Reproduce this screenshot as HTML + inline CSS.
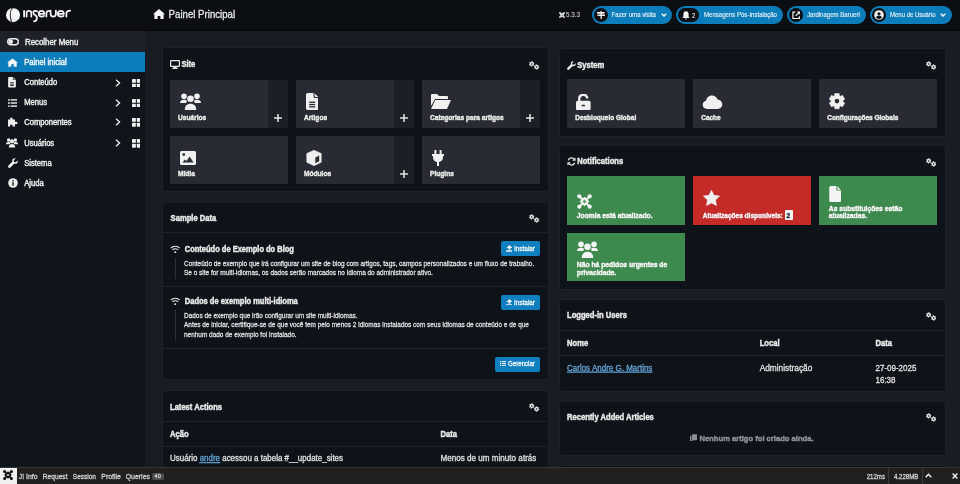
<!DOCTYPE html>
<html><head><meta charset="utf-8">
<style>
*{box-sizing:border-box;margin:0;padding:0}
html,body{width:960px;height:484px;overflow:hidden;background:#181c23;font-family:"Liberation Sans",sans-serif;color:#e6e6e6}
.abs{position:absolute}
svg{display:block}
.card{position:absolute;background:#0e1219;border:1px solid #1d2128;border-radius:2px}
.txt{position:absolute;white-space:nowrap;-webkit-text-stroke:0.2px currentColor}
</style></head><body>
<div class="abs" style="left:0px;top:0px;width:960px;height:31px;background:#0b0e13;"></div>
<div class="abs" style="left:0px;top:29px;width:960px;height:2px;background:#090b0f;"></div>
<svg class="abs" style="left:0;top:0" width="80" height="31" viewBox="0 0 80 31">
  <ellipse cx="13.05" cy="15.05" rx="7.05" ry="7.15" fill="#f6f6f6"/>
  <path d="M12.3 8.2 C9.6 10.8 9.8 17.5 11.8 22.4" stroke="#3a3c40" stroke-width="1.1" fill="none"/>
  <path d="M12.6 8.6 C13.4 7.7 14.8 7.4 16.2 7.9" stroke="#0e1015" stroke-width="0.9" fill="none"/>
  <g stroke="#f2f2f2" stroke-width="1.8" fill="none" stroke-linecap="round" stroke-linejoin="round">
   <path d="M24.1 10.8 V16.6"/>
   <path d="M26.6 16.6 V12.6 Q26.6 10.9 28.9 10.9 Q31.3 10.9 31.3 12.8 V16.6"/>
   <path d="M37.2 11.4 Q36.2 10.7 35 10.8 Q33.2 11 33.4 12.8 Q33.6 14.2 35.4 15.2 Q37.4 16.6 36.8 19 Q36.2 21.2 34 21.3"/>
   <path d="M39.3 13.9 H44.2 Q44.2 10.8 41.6 10.8 Q38.7 10.8 38.7 13.8 Q38.7 16.6 41.7 16.6 Q43.2 16.6 44 15.9"/>
   <path d="M46.4 16.6 V13.2 Q46.4 10.9 49.6 10.9"/>
   <path d="M50.6 10.6 V13.8 Q50.6 16.6 53.2 16.6 Q55.9 16.6 55.9 13.8 V10.6"/>
   <path d="M58.3 13.9 H63.8 Q63.8 10.8 61 10.8 Q57.8 10.8 57.8 13.8 Q57.8 16.6 61.1 16.6 Q62.7 16.6 63.5 15.9"/>
   <path d="M66.4 16.6 V13.2 Q66.4 10.9 70.2 10.6"/>
  </g>
 </svg>
<div class="abs" style="left:153px;top:9px"><svg width="12" height="10" viewBox="0 0 12 10"><path d="M6 0 L12 5.2 L10.6 5.2 L10.6 10 L7.4 10 L7.4 7 L4.6 7 L4.6 10 L1.4 10 L1.4 5.2 L0 5.2 Z" fill="#f5f5f5"/></svg></div>
<div class="abs" style="left:559px;top:11.6px"><svg width="6" height="6" viewBox="0 0 10 10"><g stroke="#ddd" stroke-width="1.8" fill="none" stroke-linecap="round"><path d="M1.6 1.6 L8.4 8.4 M8.4 1.6 L1.6 8.4"/><path d="M5 2.3 L7.7 5 L5 7.7 L2.3 5 Z"/></g><circle cx="1.6" cy="1.6" r="1.5" fill="#ddd"/><circle cx="8.4" cy="1.6" r="1.5" fill="#ddd"/><circle cx="1.6" cy="8.4" r="1.5" fill="#ddd"/><circle cx="8.4" cy="8.4" r="1.5" fill="#ddd"/></svg></div>
<div class="abs" style="left:592px;top:6px;width:80px;height:18px;background:#0b7dbb;border-radius:9px"></div>
<div class="abs" style="left:594px;top:7.8px;width:14px;height:14px;background:#0b0e13;border-radius:7px"></div>
<div class="abs" style="left:597px;top:11px"><svg width="8" height="8" viewBox="0 0 8 8"><rect x="3.5" y="0" width="1.3" height="8" fill="#f2f2f2"/><path d="M0 1 H7 L8 1.85 L7 2.7 H0 Z" fill="#f2f2f2"/><path d="M8 3.5 H1 L0 4.3 L1 5.1 H8 Z" fill="#f2f2f2"/></svg></div>
<div class="abs" style="left:660.7px;top:13px"><svg width="6" height="4" viewBox="0 0 6 4"><path d="M0.7 0.7 L3 3 L5.3 0.7" stroke="#f2f2f2" stroke-width="1.5" fill="none"/></svg></div>
<div class="abs" style="left:676px;top:6px;width:106.5px;height:18px;background:#0b7dbb;border-radius:9px"></div>
<div class="abs" style="left:678.3px;top:8px;width:20.7px;height:13.8px;background:#0b0e13;border-radius:7px"></div>
<div class="abs" style="left:681.5px;top:11px"><svg width="8" height="9" viewBox="0 0 8 9"><path d="M4 0.3 C6 0.3 6.6 2 6.6 3.5 L6.6 5.6 L7.6 7 L0.4 7 L1.4 5.6 L1.4 3.5 C1.4 2 2 0.3 4 0.3 Z" fill="#f2f2f2"/><path d="M3 7.6 H5 A1 1 0 0 1 3 7.6Z" fill="#f2f2f2"/></svg></div>
<div class="abs" style="left:787px;top:6px;width:79px;height:18px;background:#0b7dbb;border-radius:9px"></div>
<div class="abs" style="left:789px;top:7.8px;width:14px;height:14px;background:#0b0e13;border-radius:7px"></div>
<div class="abs" style="left:791.8px;top:10.8px"><svg width="8.5" height="8.5" viewBox="0 0 9 9"><path d="M3.5 1.2 H1 V8 H7.8 V5.5" stroke="#f2f2f2" stroke-width="1.3" fill="none"/><path d="M5 0.5 H8.5 V4 Z" fill="#f2f2f2"/><path d="M8 1 L3.8 5.2" stroke="#f2f2f2" stroke-width="1.3"/></svg></div>
<div class="abs" style="left:870px;top:6px;width:81.5px;height:18px;background:#0b7dbb;border-radius:9px"></div>
<div class="abs" style="left:872px;top:7.8px;width:14px;height:14px;background:#0b0e13;border-radius:7px"></div>
<div class="abs" style="left:874px;top:10px"><svg width="10" height="10" viewBox="0 0 10 10"><circle cx="5" cy="5" r="4.8" fill="#f2f2f2"/><circle cx="5" cy="3.8" r="1.6" fill="#0e1015"/><path d="M2 7.6 C2.6 6 3.6 5.7 5 5.7 C6.4 5.7 7.4 6 8 7.6 C7.2 8.4 6.2 8.9 5 8.9 C3.8 8.9 2.8 8.4 2 7.6Z" fill="#0e1015"/></svg></div>
<div class="abs" style="left:940.3px;top:13px"><svg width="6" height="4" viewBox="0 0 6 4"><path d="M0.7 0.7 L3 3 L5.3 0.7" stroke="#f2f2f2" stroke-width="1.5" fill="none"/></svg></div>
<div class="abs" style="left:0px;top:31px;width:145px;height:436px;background:#10141b;"></div>
<div class="abs" style="left:0px;top:31px;width:145px;height:21px;background:#1e2128;"></div>
<div class="abs" style="left:7px;top:38.3px"><svg width="12" height="7.5" viewBox="0 0 12 7.5"><rect x="0.7" y="0.7" width="10.6" height="6.1" rx="3.05" stroke="#eee" stroke-width="1.4" fill="none"/><circle cx="3.75" cy="3.75" r="2.3" fill="#eee"/></svg></div>
<div class="abs" style="left:0px;top:52px;width:145px;height:20px;background:#0b7dbb;"></div>
<div class="abs" style="left:7.3px;top:57.8px"><svg width="11" height="9" viewBox="0 0 12 9"><path d="M6 0 L12 4.8 L10.6 4.8 L10.6 9 L7.4 9 L7.4 6.4 L4.6 6.4 L4.6 9 L1.4 9 L1.4 4.8 L0 4.8 Z" fill="#f5f5f5"/></svg></div>
<div class="abs" style="left:8.4px;top:77px"><svg width="8" height="10.5" viewBox="0 0 12.5 17"><path d="M0 1.6 Q0 0 1.6 0 H7.6 V3.6 Q7.6 4.9 8.9 4.9 H12.5 V15.4 Q12.5 17 10.9 17 H1.6 Q0 17 0 15.4 Z" fill="#efefef"/><path d="M8.6 0.3 L12.2 3.9 H9.4 Q8.6 3.9 8.6 3.1 Z" fill="#efefef"/><rect x="3.2" y="8.6" width="6" height="1.3" fill="#10141b"/><rect x="3.2" y="10.9" width="6" height="1.3" fill="#10141b"/><rect x="3.2" y="13.2" width="6" height="1.3" fill="#10141b"/></svg></div>
<div class="abs" style="left:7.9px;top:98.5px"><svg width="9.5" height="8" viewBox="0 0 9.5 8"><circle cx="0.9" cy="0.9" r="0.9" fill="#eee"/><circle cx="0.9" cy="4" r="0.9" fill="#eee"/><circle cx="0.9" cy="7.1" r="0.9" fill="#eee"/><rect x="2.6" y="0.2" width="6.9" height="1.4" fill="#eee"/><rect x="2.6" y="3.3" width="6.9" height="1.4" fill="#eee"/><rect x="2.6" y="6.4" width="6.9" height="1.4" fill="#eee"/></svg></div>
<div class="abs" style="left:7.6px;top:117.2px"><svg width="10" height="10" viewBox="0 0 10 10"><path d="M0 2.5 H2.3 C2 1.6 2.2 0.5 3.4 0.5 C4.6 0.5 4.8 1.6 4.5 2.5 H7 V5 C7.9 4.7 9.5 4.7 9.5 6 C9.5 7.3 7.9 7.3 7 7 V9.5 H4.5 C4.8 8.6 4.6 7.5 3.4 7.5 C2.2 7.5 2 8.6 2.3 9.5 H0 Z" fill="#eee"/></svg></div>
<div class="abs" style="left:6.4px;top:138px"><svg width="12" height="10" viewBox="0 0 12 10"><circle cx="2.6" cy="2" r="1.7" fill="#eee"/><circle cx="9.4" cy="2" r="1.7" fill="#eee"/><path d="M0 6.2 C0 4.6 1 4.1 2.6 4.1 C3.6 4.1 4.2 4.3 4.5 4.7 L3.9 6.2 Z" fill="#eee"/><path d="M12 6.2 C12 4.6 11 4.1 9.4 4.1 C8.4 4.1 7.8 4.3 7.5 4.7 L8.1 6.2 Z" fill="#eee"/><circle cx="6" cy="3.3" r="2.1" fill="#eee"/><path d="M2.8 9.6 C2.8 7.4 4 6 6 6 C8 6 9.2 7.4 9.2 9.6 Z" fill="#eee"/></svg></div>
<div class="abs" style="left:8px;top:158px"><svg width="10" height="10" viewBox="0 0 10 10"><path d="M9.6 2.4 L7.8 4.2 L6 3.9 L5.8 2.2 L7.6 0.4 C6.2 -0.2 4.6 0.6 4.3 2 C4.2 2.6 4.3 3.2 4.5 3.6 L0.5 7.6 C-0.1 8.2 -0.1 9 0.5 9.5 C1 10.1 1.8 10.1 2.4 9.5 L6.4 5.5 C6.8 5.7 7.4 5.8 8 5.7 C9.4 5.4 10.2 3.8 9.6 2.4 Z" fill="#eee"/></svg></div>
<div class="abs" style="left:7.5px;top:177.5px"><svg width="10" height="10" viewBox="0 0 10 10"><circle cx="5" cy="5" r="4.8" fill="#eee"/><circle cx="5" cy="2.8" r="0.8" fill="#11151b"/><rect x="4.3" y="4.2" width="1.4" height="3.5" fill="#11151b"/></svg></div>
<div class="abs" style="left:115px;top:78.8px"><svg width="6" height="8" viewBox="0 0 6 8"><path d="M1 0.7 L4.6 4 L1 7.3" stroke="#eee" stroke-width="1.3" fill="none"/></svg></div>
<div class="abs" style="left:131.7px;top:78.8px"><svg width="8.7" height="8.7" viewBox="0 0 9 9"><rect x="0" y="0" width="4" height="4" rx="0.4" fill="#f0f0f0"/><rect x="5" y="0" width="4" height="4" rx="0.4" fill="#f0f0f0"/><rect x="0" y="5" width="4" height="4" rx="0.4" fill="#f0f0f0"/><rect x="5" y="5" width="4" height="4" rx="0.4" fill="#f0f0f0"/></svg></div>
<div class="abs" style="left:115px;top:98.6px"><svg width="6" height="8" viewBox="0 0 6 8"><path d="M1 0.7 L4.6 4 L1 7.3" stroke="#eee" stroke-width="1.3" fill="none"/></svg></div>
<div class="abs" style="left:131.7px;top:98.6px"><svg width="8.7" height="8.7" viewBox="0 0 9 9"><rect x="0" y="0" width="4" height="4" rx="0.4" fill="#f0f0f0"/><rect x="5" y="0" width="4" height="4" rx="0.4" fill="#f0f0f0"/><rect x="0" y="5" width="4" height="4" rx="0.4" fill="#f0f0f0"/><rect x="5" y="5" width="4" height="4" rx="0.4" fill="#f0f0f0"/></svg></div>
<div class="abs" style="left:115px;top:118.4px"><svg width="6" height="8" viewBox="0 0 6 8"><path d="M1 0.7 L4.6 4 L1 7.3" stroke="#eee" stroke-width="1.3" fill="none"/></svg></div>
<div class="abs" style="left:131.7px;top:118.4px"><svg width="8.7" height="8.7" viewBox="0 0 9 9"><rect x="0" y="0" width="4" height="4" rx="0.4" fill="#f0f0f0"/><rect x="5" y="0" width="4" height="4" rx="0.4" fill="#f0f0f0"/><rect x="0" y="5" width="4" height="4" rx="0.4" fill="#f0f0f0"/><rect x="5" y="5" width="4" height="4" rx="0.4" fill="#f0f0f0"/></svg></div>
<div class="abs" style="left:115px;top:139.2px"><svg width="6" height="8" viewBox="0 0 6 8"><path d="M1 0.7 L4.6 4 L1 7.3" stroke="#eee" stroke-width="1.3" fill="none"/></svg></div>
<div class="abs" style="left:131.7px;top:139.2px"><svg width="8.7" height="8.7" viewBox="0 0 9 9"><rect x="0" y="0" width="4" height="4" rx="0.4" fill="#f0f0f0"/><rect x="5" y="0" width="4" height="4" rx="0.4" fill="#f0f0f0"/><rect x="0" y="5" width="4" height="4" rx="0.4" fill="#f0f0f0"/><rect x="5" y="5" width="4" height="4" rx="0.4" fill="#f0f0f0"/></svg></div>
<div class="card" style="left:161.5px;top:47px;width:387px;height:145px"></div>
<div class="abs" style="left:170px;top:60px"><svg width="10" height="9" viewBox="0 0 10 9"><rect x="0.6" y="0.6" width="8.8" height="5.8" rx="0.6" stroke="#e8e8e8" stroke-width="1.2" fill="none"/><rect x="3.5" y="6.6" width="3" height="1.4" fill="#e8e8e8"/><rect x="2.3" y="7.8" width="5.4" height="1.2" fill="#e8e8e8"/></svg></div>
<div class="abs" style="left:529px;top:60.5px"><svg width="11" height="9" viewBox="0 0 11 9"><path d="M4.61 3.49 L5.12 4.09 L4.46 4.95 L3.75 4.60 L3.14 4.85 L2.88 5.59 L1.81 5.45 L1.75 4.66 L1.23 4.26 L0.46 4.40 L0.05 3.40 L0.70 2.96 L0.79 2.31 L0.28 1.71 L0.94 0.85 L1.65 1.20 L2.26 0.95 L2.52 0.21 L3.59 0.35 L3.65 1.14 L4.17 1.54 L4.94 1.40 L5.35 2.40 L4.70 2.84 Z" fill="#e8e8e8"/><circle cx="2.7" cy="2.9" r="0.75" fill="#10141a"/><path d="M9.60 6.00 L10.27 6.42 L9.89 7.43 L9.11 7.31 L8.60 7.73 L8.57 8.52 L7.50 8.70 L7.21 7.96 L6.60 7.73 L5.90 8.10 L5.21 7.26 L5.71 6.65 L5.60 6.00 L4.93 5.58 L5.31 4.57 L6.09 4.69 L6.60 4.27 L6.63 3.48 L7.70 3.30 L7.99 4.04 L8.60 4.27 L9.30 3.90 L9.99 4.74 L9.49 5.35 Z" fill="#e8e8e8"/><circle cx="7.6" cy="6.0" r="0.8" fill="#10141a"/></svg></div>
<div class="abs" style="left:170px;top:80px;width:98px;height:48px;background:#282b33;"></div>
<div class="abs" style="left:268px;top:80px;width:20px;height:48px;background:#1b1f26;"></div>
<div class="abs" style="left:274px;top:114px"><svg width="8" height="8" viewBox="0 0 8 8"><rect x="3.3" y="0" width="1.4" height="8" fill="#f0f0f0"/><rect x="0" y="3.3" width="8" height="1.4" fill="#f0f0f0"/></svg></div>
<div class="abs" style="left:179.7px;top:92.6px"><svg width="21" height="17" viewBox="0 0 21 17"><circle cx="4" cy="3.3" r="2.8" fill="#f0f0f0"/><circle cx="17" cy="3.3" r="2.8" fill="#f0f0f0"/><path d="M0 10 C0 7.6 1.6 6.8 4 6.8 C5.6 6.8 6.6 7.3 7 8 L6.2 10 Z" fill="#f0f0f0"/><path d="M21 10 C21 7.6 19.4 6.8 17 6.8 C15.4 6.8 14.4 7.3 14 8 L14.8 10 Z" fill="#f0f0f0"/><circle cx="10.5" cy="5.8" r="3.3" fill="#f0f0f0"/><path d="M4.8 17 C4.8 13 6.8 10.8 10.5 10.8 C14.2 10.8 16.2 13 16.2 17 Z" fill="#f0f0f0"/></svg></div>
<div class="abs" style="left:296px;top:80px;width:98px;height:48px;background:#282b33;"></div>
<div class="abs" style="left:394px;top:80px;width:20px;height:48px;background:#1b1f26;"></div>
<div class="abs" style="left:400px;top:114px"><svg width="8" height="8" viewBox="0 0 8 8"><rect x="3.3" y="0" width="1.4" height="8" fill="#f0f0f0"/><rect x="0" y="3.3" width="8" height="1.4" fill="#f0f0f0"/></svg></div>
<div class="abs" style="left:305.9px;top:93px"><svg width="12.5" height="17" viewBox="0 0 12.5 17"><path d="M0 1.6 Q0 0 1.6 0 H7.6 V3.6 Q7.6 4.9 8.9 4.9 H12.5 V15.4 Q12.5 17 10.9 17 H1.6 Q0 17 0 15.4 Z" fill="#f0f0f0"/><path d="M8.6 0.3 L12.2 3.9 H9.4 Q8.6 3.9 8.6 3.1 Z" fill="#f0f0f0"/><rect x="3.2" y="8.6" width="6" height="1.3" fill="#292c33"/><rect x="3.2" y="10.9" width="6" height="1.3" fill="#292c33"/><rect x="3.2" y="13.2" width="6" height="1.3" fill="#292c33"/></svg></div>
<div class="abs" style="left:422px;top:80px;width:98px;height:48px;background:#282b33;"></div>
<div class="abs" style="left:520px;top:80px;width:20px;height:48px;background:#1b1f26;"></div>
<div class="abs" style="left:526px;top:114px"><svg width="8" height="8" viewBox="0 0 8 8"><rect x="3.3" y="0" width="1.4" height="8" fill="#f0f0f0"/><rect x="0" y="3.3" width="8" height="1.4" fill="#f0f0f0"/></svg></div>
<div class="abs" style="left:430.5px;top:94px"><svg width="20" height="15" viewBox="0 0 20 15"><path d="M0 1 Q0 0 1 0 H6 L8 2 H16 Q17 2 17 3 V5 H4 L0 12 Z" fill="#f0f0f0"/><path d="M4.2 6 H20 L16 15 H0 Z" fill="#f0f0f0"/></svg></div>
<div class="abs" style="left:170px;top:136px;width:118px;height:48px;background:#282b33;"></div>
<div class="abs" style="left:180px;top:151px"><svg width="16" height="14" viewBox="0 0 16 14"><rect x="0" y="0" width="16" height="14" rx="1.6" fill="#f0f0f0"/><circle cx="3.8" cy="3.6" r="1.4" fill="#292c33"/><path d="M2.4 11.6 L5 8.6 L6.6 10 L9.6 5.6 L13.6 11.6 Z" fill="#292c33"/></svg></div>
<div class="abs" style="left:296px;top:136px;width:98px;height:48px;background:#282b33;"></div>
<div class="abs" style="left:394px;top:136px;width:20px;height:48px;background:#1b1f26;"></div>
<div class="abs" style="left:400px;top:170px"><svg width="8" height="8" viewBox="0 0 8 8"><rect x="3.3" y="0" width="1.4" height="8" fill="#f0f0f0"/><rect x="0" y="3.3" width="8" height="1.4" fill="#f0f0f0"/></svg></div>
<div class="abs" style="left:305.7px;top:149.8px"><svg width="16" height="16" viewBox="0 0 16 16"><path d="M8 0.3 L15.2 3.5 V12.3 L8 15.7 L0.8 12.3 V3.5 Z" fill="#f0f0f0" stroke="#f0f0f0" stroke-width="0.6" stroke-linejoin="round"/><path d="M9.3 7.5 L13.2 5.6 V11.3 L9.3 13.3 Z" fill="#292c33"/></svg></div>
<div class="abs" style="left:422px;top:136px;width:118px;height:48px;background:#282b33;"></div>
<div class="abs" style="left:432px;top:150.3px"><svg width="12" height="16" viewBox="0 0 12 16"><rect x="2.4" y="0" width="2" height="4.6" rx="0.6" fill="#f0f0f0"/><rect x="7.6" y="0" width="2" height="4.6" rx="0.6" fill="#f0f0f0"/><path d="M0 4 H12 V6 H11 V7.5 C11 10 9.3 11.6 7 12 V16 H5 V12 C2.7 11.6 1 10 1 7.5 V6 H0 Z" fill="#f0f0f0"/></svg></div>
<div class="card" style="left:161.5px;top:202px;width:387px;height:177.5px"></div>
<div class="abs" style="left:529px;top:214.3px"><svg width="11" height="9" viewBox="0 0 11 9"><path d="M4.61 3.49 L5.12 4.09 L4.46 4.95 L3.75 4.60 L3.14 4.85 L2.88 5.59 L1.81 5.45 L1.75 4.66 L1.23 4.26 L0.46 4.40 L0.05 3.40 L0.70 2.96 L0.79 2.31 L0.28 1.71 L0.94 0.85 L1.65 1.20 L2.26 0.95 L2.52 0.21 L3.59 0.35 L3.65 1.14 L4.17 1.54 L4.94 1.40 L5.35 2.40 L4.70 2.84 Z" fill="#e8e8e8"/><circle cx="2.7" cy="2.9" r="0.75" fill="#10141a"/><path d="M9.60 6.00 L10.27 6.42 L9.89 7.43 L9.11 7.31 L8.60 7.73 L8.57 8.52 L7.50 8.70 L7.21 7.96 L6.60 7.73 L5.90 8.10 L5.21 7.26 L5.71 6.65 L5.60 6.00 L4.93 5.58 L5.31 4.57 L6.09 4.69 L6.60 4.27 L6.63 3.48 L7.70 3.30 L7.99 4.04 L8.60 4.27 L9.30 3.90 L9.99 4.74 L9.49 5.35 Z" fill="#e8e8e8"/><circle cx="7.6" cy="6.0" r="0.8" fill="#10141a"/></svg></div>
<div class="abs" style="left:163px;top:232px;width:384px;height:1px;background:#1f242b;"></div>
<div class="abs" style="left:170.3px;top:244.5px"><svg width="10.5" height="8.2" viewBox="0 0 10 8"><path d="M0.6 3 A6.2 6.2 0 0 1 9.4 3" stroke="#e8e8e8" stroke-width="1.1" fill="none"/><path d="M2.3 4.8 A3.8 3.8 0 0 1 7.7 4.8" stroke="#e8e8e8" stroke-width="1.1" fill="none"/><circle cx="5" cy="7" r="0.95" fill="#e8e8e8"/></svg></div>
<div class="abs" style="left:501px;top:241px;width:39px;height:15px;background:#0f7fc0;border-radius:2px"></div>
<div class="abs" style="left:505.6px;top:245.2px"><svg width="6.8" height="6.8" viewBox="0 0 7 7"><path d="M3.5 0 L6.6 3 H4.5 V5 H2.5 V3 H0.4 Z" fill="#f0f0f0"/><rect x="0" y="5.4" width="7" height="1.6" rx="0.3" fill="#f0f0f0"/></svg></div>
<div class="abs" style="left:174.6px;top:258.3px;width:1.5px;height:20.7px;background:#2c3037;"></div>
<div class="abs" style="left:163px;top:286px;width:384px;height:1px;background:#1f242b;"></div>
<div class="abs" style="left:170.3px;top:296.5px"><svg width="10.5" height="8.2" viewBox="0 0 10 8"><path d="M0.6 3 A6.2 6.2 0 0 1 9.4 3" stroke="#e8e8e8" stroke-width="1.1" fill="none"/><path d="M2.3 4.8 A3.8 3.8 0 0 1 7.7 4.8" stroke="#e8e8e8" stroke-width="1.1" fill="none"/><circle cx="5" cy="7" r="0.95" fill="#e8e8e8"/></svg></div>
<div class="abs" style="left:501px;top:294.5px;width:39px;height:15px;background:#0f7fc0;border-radius:2px"></div>
<div class="abs" style="left:505.6px;top:298.7px"><svg width="6.8" height="6.8" viewBox="0 0 7 7"><path d="M3.5 0 L6.6 3 H4.5 V5 H2.5 V3 H0.4 Z" fill="#f0f0f0"/><rect x="0" y="5.4" width="7" height="1.6" rx="0.3" fill="#f0f0f0"/></svg></div>
<div class="abs" style="left:174.6px;top:310.3px;width:1.5px;height:30.299999999999997px;background:#2c3037;"></div>
<div class="abs" style="left:163px;top:348px;width:384px;height:1px;background:#1f242b;"></div>
<div class="abs" style="left:495px;top:357px;width:45px;height:15px;background:#0f7fc0;border-radius:2px"></div>
<div class="abs" style="left:499.6px;top:361px"><svg width="6.2" height="5.4" viewBox="0 0 6.2 5.4"><rect x="0" y="0" width="1.3" height="1.3" fill="#f0f0f0"/><rect x="0" y="2.05" width="1.3" height="1.3" fill="#f0f0f0"/><rect x="0" y="4.1" width="1.3" height="1.3" fill="#f0f0f0"/><rect x="2" y="0.1" width="4.2" height="1.1" fill="#f0f0f0"/><rect x="2" y="2.15" width="4.2" height="1.1" fill="#f0f0f0"/><rect x="2" y="4.2" width="4.2" height="1.1" fill="#f0f0f0"/></svg></div>
<div class="card" style="left:161.5px;top:389.5px;width:387px;height:100px"></div>
<div class="abs" style="left:529px;top:403px"><svg width="11" height="9" viewBox="0 0 11 9"><path d="M4.61 3.49 L5.12 4.09 L4.46 4.95 L3.75 4.60 L3.14 4.85 L2.88 5.59 L1.81 5.45 L1.75 4.66 L1.23 4.26 L0.46 4.40 L0.05 3.40 L0.70 2.96 L0.79 2.31 L0.28 1.71 L0.94 0.85 L1.65 1.20 L2.26 0.95 L2.52 0.21 L3.59 0.35 L3.65 1.14 L4.17 1.54 L4.94 1.40 L5.35 2.40 L4.70 2.84 Z" fill="#e8e8e8"/><circle cx="2.7" cy="2.9" r="0.75" fill="#10141a"/><path d="M9.60 6.00 L10.27 6.42 L9.89 7.43 L9.11 7.31 L8.60 7.73 L8.57 8.52 L7.50 8.70 L7.21 7.96 L6.60 7.73 L5.90 8.10 L5.21 7.26 L5.71 6.65 L5.60 6.00 L4.93 5.58 L5.31 4.57 L6.09 4.69 L6.60 4.27 L6.63 3.48 L7.70 3.30 L7.99 4.04 L8.60 4.27 L9.30 3.90 L9.99 4.74 L9.49 5.35 Z" fill="#e8e8e8"/><circle cx="7.6" cy="6.0" r="0.8" fill="#10141a"/></svg></div>
<div class="abs" style="left:163px;top:421px;width:384px;height:1px;background:#1f242b;"></div>
<div class="abs" style="left:163px;top:446px;width:384px;height:1px;background:#1f242b;"></div>
<div class="card" style="left:558.5px;top:48px;width:387px;height:89px"></div>
<div class="abs" style="left:567px;top:60.5px"><svg width="9" height="9" viewBox="0 0 10 10"><path d="M9.6 2.4 L7.8 4.2 L6 3.9 L5.8 2.2 L7.6 0.4 C6.2 -0.2 4.6 0.6 4.3 2 C4.2 2.6 4.3 3.2 4.5 3.6 L0.5 7.6 C-0.1 8.2 -0.1 9 0.5 9.5 C1 10.1 1.8 10.1 2.4 9.5 L6.4 5.5 C6.8 5.7 7.4 5.8 8 5.7 C9.4 5.4 10.2 3.8 9.6 2.4 Z" fill="#e8e8e8"/></svg></div>
<div class="abs" style="left:926px;top:60.5px"><svg width="11" height="9" viewBox="0 0 11 9"><path d="M4.61 3.49 L5.12 4.09 L4.46 4.95 L3.75 4.60 L3.14 4.85 L2.88 5.59 L1.81 5.45 L1.75 4.66 L1.23 4.26 L0.46 4.40 L0.05 3.40 L0.70 2.96 L0.79 2.31 L0.28 1.71 L0.94 0.85 L1.65 1.20 L2.26 0.95 L2.52 0.21 L3.59 0.35 L3.65 1.14 L4.17 1.54 L4.94 1.40 L5.35 2.40 L4.70 2.84 Z" fill="#e8e8e8"/><circle cx="2.7" cy="2.9" r="0.75" fill="#10141a"/><path d="M9.60 6.00 L10.27 6.42 L9.89 7.43 L9.11 7.31 L8.60 7.73 L8.57 8.52 L7.50 8.70 L7.21 7.96 L6.60 7.73 L5.90 8.10 L5.21 7.26 L5.71 6.65 L5.60 6.00 L4.93 5.58 L5.31 4.57 L6.09 4.69 L6.60 4.27 L6.63 3.48 L7.70 3.30 L7.99 4.04 L8.60 4.27 L9.30 3.90 L9.99 4.74 L9.49 5.35 Z" fill="#e8e8e8"/><circle cx="7.6" cy="6.0" r="0.8" fill="#10141a"/></svg></div>
<div class="abs" style="left:567px;top:79.3px;width:118px;height:48.5px;background:#282b33;"></div>
<div class="abs" style="left:576.4px;top:93.9px"><svg width="14.6" height="16.3" viewBox="0 0 14.6 16.3"><path d="M3.2 7.5 V5 A4.1 4.1 0 0 1 11.2 3.6" stroke="#f0f0f0" stroke-width="2.3" fill="none" stroke-linecap="round"/><rect x="0" y="6.8" width="14.6" height="9.5" rx="1.8" fill="#f0f0f0"/><rect x="5.6" y="10.7" width="3.4" height="1.6" rx="0.6" fill="#292c33"/></svg></div>
<div class="abs" style="left:693px;top:79.3px;width:118px;height:48.5px;background:#282b33;"></div>
<div class="abs" style="left:702.3px;top:94.7px"><svg width="21" height="14" viewBox="0 0 21 15"><path d="M4.5 15 C2 15 0 13 0 10.5 C0 8.3 1.6 6.5 3.6 6.2 C4 3 6.6 0.5 10 0.5 C12.8 0.5 15.2 2.3 16 4.8 C18.8 5 21 7.3 21 10 C21 12.8 18.8 15 16 15 Z" fill="#f0f0f0"/></svg></div>
<div class="abs" style="left:819px;top:79.3px;width:118px;height:48.5px;background:#282b33;"></div>
<div class="abs" style="left:828.6px;top:93.4px"><svg width="16" height="16.2" viewBox="0 0 16 16.2"><path d="M5.49 2.65 L5.83 0.40 L10.17 0.40 L10.51 2.65 L11.46 3.20 L13.58 2.37 L15.75 6.13 L13.97 7.55 L13.97 8.65 L15.75 10.07 L13.58 13.83 L11.46 13.00 L10.51 13.55 L10.17 15.80 L5.83 15.80 L5.49 13.55 L4.54 13.00 L2.42 13.83 L0.25 10.07 L2.03 8.65 L2.03 7.55 L0.25 6.13 L2.42 2.37 L4.54 3.20 Z" fill="#f0f0f0" stroke="#f0f0f0" stroke-width="0.5" stroke-linejoin="round"/><circle cx="8" cy="8.1" r="2.3" fill="#292c33"/></svg></div>
<div class="card" style="left:558.5px;top:144.6px;width:387px;height:145px"></div>
<div class="abs" style="left:567px;top:157.2px"><svg width="9" height="9" viewBox="0 0 10 10"><path d="M8.3 3 A3.8 3.8 0 0 0 1.4 3.6" stroke="#e8e8e8" stroke-width="1.4" fill="none"/><path d="M9.5 0.5 V4.2 H5.8 Z" fill="#e8e8e8"/><path d="M1.7 7 A3.8 3.8 0 0 0 8.6 6.4" stroke="#e8e8e8" stroke-width="1.4" fill="none"/><path d="M0.5 9.5 V5.8 H4.2 Z" fill="#e8e8e8"/></svg></div>
<div class="abs" style="left:926px;top:157.5px"><svg width="11" height="9" viewBox="0 0 11 9"><path d="M4.61 3.49 L5.12 4.09 L4.46 4.95 L3.75 4.60 L3.14 4.85 L2.88 5.59 L1.81 5.45 L1.75 4.66 L1.23 4.26 L0.46 4.40 L0.05 3.40 L0.70 2.96 L0.79 2.31 L0.28 1.71 L0.94 0.85 L1.65 1.20 L2.26 0.95 L2.52 0.21 L3.59 0.35 L3.65 1.14 L4.17 1.54 L4.94 1.40 L5.35 2.40 L4.70 2.84 Z" fill="#e8e8e8"/><circle cx="2.7" cy="2.9" r="0.75" fill="#10141a"/><path d="M9.60 6.00 L10.27 6.42 L9.89 7.43 L9.11 7.31 L8.60 7.73 L8.57 8.52 L7.50 8.70 L7.21 7.96 L6.60 7.73 L5.90 8.10 L5.21 7.26 L5.71 6.65 L5.60 6.00 L4.93 5.58 L5.31 4.57 L6.09 4.69 L6.60 4.27 L6.63 3.48 L7.70 3.30 L7.99 4.04 L8.60 4.27 L9.30 3.90 L9.99 4.74 L9.49 5.35 Z" fill="#e8e8e8"/><circle cx="7.6" cy="6.0" r="0.8" fill="#10141a"/></svg></div>
<div class="abs" style="left:567px;top:176px;width:118px;height:48.6px;background:#3e894d;"></div>
<div class="abs" style="left:576.6px;top:194px"><svg width="15" height="15" viewBox="0 0 15 15"><g stroke="#f4f4f4" stroke-width="1.9" fill="none" stroke-linecap="round"><path d="M2.5 2.5 L7.5 7.5 L12.5 2.5 M2.5 12.5 L7.5 7.5 L12.5 12.5"/><path d="M7.5 4 L11 7.5 L7.5 11 L4 7.5 Z"/></g><circle cx="2.3" cy="2.3" r="2.1" fill="#f4f4f4"/><circle cx="12.7" cy="2.3" r="2.1" fill="#f4f4f4"/><circle cx="2.3" cy="12.7" r="2.1" fill="#f4f4f4"/><circle cx="12.7" cy="12.7" r="2.1" fill="#f4f4f4"/><circle cx="7.5" cy="7.5" r="1.3" fill="#3e894d"/></svg></div>
<div class="abs" style="left:693px;top:176px;width:118px;height:48.6px;background:#c42a28;"></div>
<div class="abs" style="left:703px;top:190px"><svg width="17" height="16" viewBox="0 0 17 16"><path d="M8.5 0.3 L11 5.3 L16.6 6.1 L12.5 10 L13.5 15.6 L8.5 13 L3.5 15.6 L4.5 10 L0.4 6.1 L6 5.3 Z" fill="#f0f0f0" stroke="#f0f0f0" stroke-width="0.6" stroke-linejoin="round"/></svg></div>
<div class="abs" style="left:819px;top:176px;width:118px;height:48.6px;background:#3e894d;"></div>
<div class="abs" style="left:828.6px;top:186px"><svg width="12.3" height="16" viewBox="0 0 12.5 17"><path d="M0 1.6 Q0 0 1.6 0 H7.6 V3.6 Q7.6 4.9 8.9 4.9 H12.5 V15.4 Q12.5 17 10.9 17 H1.6 Q0 17 0 15.4 Z" fill="#f4f4f4"/><path d="M8.6 0.3 L12.2 3.9 H9.4 Q8.6 3.9 8.6 3.1 Z" fill="#f4f4f4"/></svg></div>
<div class="abs" style="left:785.1px;top:210.3px;width:7.5px;height:9.4px;background:#f4f4f4;border-radius:1px"></div>
<div class="abs" style="left:567px;top:232.8px;width:118px;height:48.6px;background:#3e894d;"></div>
<div class="abs" style="left:576.5px;top:241.3px"><svg width="21" height="17" viewBox="0 0 21 17"><circle cx="4" cy="3.3" r="2.8" fill="#f4f4f4"/><circle cx="17" cy="3.3" r="2.8" fill="#f4f4f4"/><path d="M0 10 C0 7.6 1.6 6.8 4 6.8 C5.6 6.8 6.6 7.3 7 8 L6.2 10 Z" fill="#f4f4f4"/><path d="M21 10 C21 7.6 19.4 6.8 17 6.8 C15.4 6.8 14.4 7.3 14 8 L14.8 10 Z" fill="#f4f4f4"/><circle cx="10.5" cy="5.8" r="3.3" fill="#f4f4f4"/><path d="M4.8 17 C4.8 13 6.8 10.8 10.5 10.8 C14.2 10.8 16.2 13 16.2 17 Z" fill="#f4f4f4"/></svg></div>
<div class="card" style="left:558.5px;top:298.5px;width:387px;height:93px"></div>
<div class="abs" style="left:926px;top:311.5px"><svg width="11" height="9" viewBox="0 0 11 9"><path d="M4.61 3.49 L5.12 4.09 L4.46 4.95 L3.75 4.60 L3.14 4.85 L2.88 5.59 L1.81 5.45 L1.75 4.66 L1.23 4.26 L0.46 4.40 L0.05 3.40 L0.70 2.96 L0.79 2.31 L0.28 1.71 L0.94 0.85 L1.65 1.20 L2.26 0.95 L2.52 0.21 L3.59 0.35 L3.65 1.14 L4.17 1.54 L4.94 1.40 L5.35 2.40 L4.70 2.84 Z" fill="#e8e8e8"/><circle cx="2.7" cy="2.9" r="0.75" fill="#10141a"/><path d="M9.60 6.00 L10.27 6.42 L9.89 7.43 L9.11 7.31 L8.60 7.73 L8.57 8.52 L7.50 8.70 L7.21 7.96 L6.60 7.73 L5.90 8.10 L5.21 7.26 L5.71 6.65 L5.60 6.00 L4.93 5.58 L5.31 4.57 L6.09 4.69 L6.60 4.27 L6.63 3.48 L7.70 3.30 L7.99 4.04 L8.60 4.27 L9.30 3.90 L9.99 4.74 L9.49 5.35 Z" fill="#e8e8e8"/><circle cx="7.6" cy="6.0" r="0.8" fill="#10141a"/></svg></div>
<div class="abs" style="left:560px;top:330px;width:384px;height:1px;background:#1f242b;"></div>
<div class="abs" style="left:560px;top:354.5px;width:384px;height:1px;background:#1f242b;"></div>
<div class="card" style="left:558.5px;top:401px;width:387px;height:55px"></div>
<div class="abs" style="left:926px;top:413px"><svg width="11" height="9" viewBox="0 0 11 9"><path d="M4.61 3.49 L5.12 4.09 L4.46 4.95 L3.75 4.60 L3.14 4.85 L2.88 5.59 L1.81 5.45 L1.75 4.66 L1.23 4.26 L0.46 4.40 L0.05 3.40 L0.70 2.96 L0.79 2.31 L0.28 1.71 L0.94 0.85 L1.65 1.20 L2.26 0.95 L2.52 0.21 L3.59 0.35 L3.65 1.14 L4.17 1.54 L4.94 1.40 L5.35 2.40 L4.70 2.84 Z" fill="#e8e8e8"/><circle cx="2.7" cy="2.9" r="0.75" fill="#10141a"/><path d="M9.60 6.00 L10.27 6.42 L9.89 7.43 L9.11 7.31 L8.60 7.73 L8.57 8.52 L7.50 8.70 L7.21 7.96 L6.60 7.73 L5.90 8.10 L5.21 7.26 L5.71 6.65 L5.60 6.00 L4.93 5.58 L5.31 4.57 L6.09 4.69 L6.60 4.27 L6.63 3.48 L7.70 3.30 L7.99 4.04 L8.60 4.27 L9.30 3.90 L9.99 4.74 L9.49 5.35 Z" fill="#e8e8e8"/><circle cx="7.6" cy="6.0" r="0.8" fill="#10141a"/></svg></div>
<div class="abs" style="left:689.7px;top:433.7px"><svg width="7.4" height="7.8" viewBox="0 0 8 8"><rect x="2.2" y="0" width="5.8" height="6.2" rx="0.6" fill="#8a8d92"/><path d="M1.6 1.8 H0.6 Q0 1.8 0 2.4 V7.4 Q0 8 0.6 8 H5.2 Q5.8 8 5.8 7.4 V6.8 H1.6 Z" fill="#8a8d92"/></svg></div>
<div class="card" style="left:558.5px;top:465px;width:387px;height:30px"></div>
<div class="abs" style="left:0px;top:467px;width:960px;height:17px;background:#21201f;border-top:1px solid #353535"></div>
<div class="abs" style="left:0px;top:468px;width:16.5px;height:16px;background:#f0f0f0;"></div>
<div class="abs" style="left:2.9px;top:470.2px"><svg width="10" height="10" viewBox="0 0 10 10"><g stroke="#111" stroke-width="1.6" fill="none" stroke-linecap="round"><path d="M1.6 1.6 L8.4 8.4 M8.4 1.6 L1.6 8.4"/><path d="M5 2.3 L7.7 5 L5 7.7 L2.3 5 Z"/></g><circle cx="1.6" cy="1.6" r="1.5" fill="#111"/><circle cx="8.4" cy="1.6" r="1.5" fill="#111"/><circle cx="1.6" cy="8.4" r="1.5" fill="#111"/><circle cx="8.4" cy="8.4" r="1.5" fill="#111"/><circle cx="5" cy="5" r="0.9" fill="#f0f0f0"/></svg></div>
<div class="abs" style="left:152.3px;top:472.8px;width:11.7px;height:7.5px;background:#4a4a4a;border-radius:2px"></div>
<div class="abs" style="left:888.3px;top:468px;width:1px;height:16px;background:#3a3a3a;"></div>
<div class="abs" style="left:921.8px;top:468px;width:1px;height:16px;background:#3a3a3a;"></div>
<div class="abs" style="left:925px;top:473px"><svg width="7" height="5" viewBox="0 0 7 5"><path d="M0.7 4.3 L3.5 1.2 L6.3 4.3" stroke="#eee" stroke-width="1.4" fill="none"/></svg></div>
<div class="abs" style="left:951.5px;top:472.8px"><svg width="6" height="6" viewBox="0 0 6 6"><path d="M0.6 0.6 L5.4 5.4 M5.4 0.6 L0.6 5.4" stroke="#eee" stroke-width="1.4"/></svg></div>
<svg class="abs" style="left:0;top:0;will-change:transform" width="960" height="484" font-family="Liberation Sans" xml:space="preserve">
<text x="168.6" y="18.4" font-size="10.23" fill="#e8e8e8" stroke="#e8e8e8" stroke-width="0.3" textLength="66.51" lengthAdjust="spacingAndGlyphs">Painel Principal</text>
<text x="566" y="17.3" font-size="6.93" fill="#cfcfcf" stroke="#cfcfcf" stroke-width="0.1" textLength="14.01" lengthAdjust="spacingAndGlyphs">5.3.3</text>
<text x="611.6" y="17" font-size="6.66" fill="#e9f2f8" stroke="#e9f2f8" stroke-width="0.12" textLength="44.38" lengthAdjust="spacingAndGlyphs">Fazer uma visita</text>
<text x="692" y="17.5" font-size="6.66" fill="#eee" stroke="#eee" stroke-width="0.1" textLength="3.36" lengthAdjust="spacingAndGlyphs">2</text>
<text x="704" y="17" font-size="6.66" fill="#e9f2f8" stroke="#e9f2f8" stroke-width="0.12" textLength="72.97" lengthAdjust="spacingAndGlyphs">Mensagens Pós-Instalação</text>
<text x="807" y="17" font-size="6.66" fill="#e9f2f8" stroke="#e9f2f8" stroke-width="0.12" textLength="52.79" lengthAdjust="spacingAndGlyphs">Jardinagem Barueri</text>
<text x="890" y="17" font-size="6.59" fill="#e9f2f8" stroke="#e9f2f8" stroke-width="0.12" textLength="45.61" lengthAdjust="spacingAndGlyphs">Menu de Usuário</text>
<text x="25" y="45.2" font-size="8.65" fill="#e8e8e8" stroke="#e8e8e8" stroke-width="0.45" textLength="53.30" lengthAdjust="spacingAndGlyphs">Recolher Menu</text>
<text x="24.2" y="65.2" font-size="8.42" fill="#eef5fa" stroke="#eef5fa" stroke-width="0.45" textLength="42.52" lengthAdjust="spacingAndGlyphs">Painel inicial</text>
<text x="24.2" y="85.4" font-size="8.36" fill="#e8e8e8" stroke="#e8e8e8" stroke-width="0.45" textLength="32.96" lengthAdjust="spacingAndGlyphs">Conteúdo</text>
<text x="24.2" y="105.2" font-size="8.36" fill="#e8e8e8" stroke="#e8e8e8" stroke-width="0.45" textLength="22.81" lengthAdjust="spacingAndGlyphs">Menus</text>
<text x="24.2" y="125" font-size="8.39" fill="#e8e8e8" stroke="#e8e8e8" stroke-width="0.45" textLength="47.50" lengthAdjust="spacingAndGlyphs">Componentes</text>
<text x="24.2" y="145.8" font-size="8.36" fill="#e8e8e8" stroke="#e8e8e8" stroke-width="0.45" textLength="29.99" lengthAdjust="spacingAndGlyphs">Usuários</text>
<text x="24.2" y="165.8" font-size="8.37" fill="#e8e8e8" stroke="#e8e8e8" stroke-width="0.45" textLength="27.49" lengthAdjust="spacingAndGlyphs">Sistema</text>
<text x="24.2" y="185.8" font-size="8.38" fill="#e8e8e8" stroke="#e8e8e8" stroke-width="0.45" textLength="19.49" lengthAdjust="spacingAndGlyphs">Ajuda</text>
<text x="181.4" y="67.3" font-size="8.36" fill="#e8e8e8" font-weight="bold" stroke="#e8e8e8" stroke-width="0.44999999999999996" textLength="13.94" lengthAdjust="spacingAndGlyphs">Site</text>
<text x="178" y="120" font-size="7.26" fill="#e8e8e8" font-weight="bold" stroke="#e8e8e8" stroke-width="0.44999999999999996" textLength="28.24" lengthAdjust="spacingAndGlyphs">Usuários</text>
<text x="304" y="120" font-size="7.26" fill="#e8e8e8" font-weight="bold" stroke="#e8e8e8" stroke-width="0.44999999999999996" textLength="23.10" lengthAdjust="spacingAndGlyphs">Artigos</text>
<text x="430" y="120" font-size="7.26" fill="#e8e8e8" font-weight="bold" stroke="#e8e8e8" stroke-width="0.44999999999999996" textLength="73.72" lengthAdjust="spacingAndGlyphs">Categorias para artigos</text>
<text x="178" y="176" font-size="7.26" fill="#e8e8e8" font-weight="bold" stroke="#e8e8e8" stroke-width="0.44999999999999996" textLength="16.87" lengthAdjust="spacingAndGlyphs">Mídia</text>
<text x="304" y="176" font-size="7.26" fill="#e8e8e8" font-weight="bold" stroke="#e8e8e8" stroke-width="0.44999999999999996" textLength="27.13" lengthAdjust="spacingAndGlyphs">Módulos</text>
<text x="430" y="176" font-size="7.26" fill="#e8e8e8" font-weight="bold" stroke="#e8e8e8" stroke-width="0.44999999999999996" textLength="23.83" lengthAdjust="spacingAndGlyphs">Plugins</text>
<text x="170.6" y="221" font-size="8.36" fill="#e8e8e8" font-weight="bold" stroke="#e8e8e8" stroke-width="0.44999999999999996" textLength="45.62" lengthAdjust="spacingAndGlyphs">Sample Data</text>
<text x="184.8" y="252" font-size="8.25" fill="#e8e8e8" font-weight="bold" stroke="#e8e8e8" stroke-width="0.44999999999999996" textLength="109.16" lengthAdjust="spacingAndGlyphs">Conteúdo de Exemplo do Blog</text>
<text x="514" y="251.2" font-size="7.04" fill="#eef7fc" stroke="#eef7fc" stroke-width="0.3" textLength="21.00" lengthAdjust="spacingAndGlyphs">Instalar</text>
<text x="184" y="265.6" font-size="7.10" fill="#dcdcdc" stroke="#dcdcdc" stroke-width="0.3" textLength="350.26" lengthAdjust="spacingAndGlyphs">Conteúdo de exemplo que irá configurar um site de blog com artigos, tags, campos personalizados e um fluxo de trabalho.</text>
<text x="184" y="275.20000000000005" font-size="7.10" fill="#dcdcdc" stroke="#dcdcdc" stroke-width="0.3" textLength="248.78" lengthAdjust="spacingAndGlyphs">Se o site for multi-idiomas, os dados serão marcados no idioma do administrador ativo.</text>
<text x="184.8" y="304" font-size="8.25" fill="#e8e8e8" font-weight="bold" stroke="#e8e8e8" stroke-width="0.44999999999999996" textLength="112.93" lengthAdjust="spacingAndGlyphs">Dados de exemplo multi-idioma</text>
<text x="514" y="304.7" font-size="7.04" fill="#eef7fc" stroke="#eef7fc" stroke-width="0.3" textLength="21.00" lengthAdjust="spacingAndGlyphs">Instalar</text>
<text x="184" y="317.6" font-size="7.10" fill="#dcdcdc" stroke="#dcdcdc" stroke-width="0.3" textLength="173.50" lengthAdjust="spacingAndGlyphs">Dados de exemplo que irão configurar um site multi-idiomas.</text>
<text x="184" y="327.20000000000005" font-size="7.10" fill="#dcdcdc" stroke="#dcdcdc" stroke-width="0.3" textLength="344.89" lengthAdjust="spacingAndGlyphs">Antes de iniciar, certifique-se de que você tem pelo menos 2 idiomas instalados com seus idiomas de conteúdo e de que</text>
<text x="184" y="336.8" font-size="7.10" fill="#dcdcdc" stroke="#dcdcdc" stroke-width="0.3" textLength="112.59" lengthAdjust="spacingAndGlyphs">nenhum dado de exemplo foi instalado.</text>
<text x="508.1" y="366.4" font-size="6.93" fill="#eef7fc" stroke="#eef7fc" stroke-width="0.3" textLength="26.80" lengthAdjust="spacingAndGlyphs">Gerenciar</text>
<text x="170" y="410" font-size="8.36" fill="#e8e8e8" font-weight="bold" stroke="#e8e8e8" stroke-width="0.44999999999999996" textLength="52.08" lengthAdjust="spacingAndGlyphs">Latest Actions</text>
<text x="170" y="436.8" font-size="8.36" fill="#e8e8e8" font-weight="bold" stroke="#e8e8e8" stroke-width="0.44999999999999996" textLength="18.58" lengthAdjust="spacingAndGlyphs">Ação</text>
<text x="440.5" y="436.8" font-size="8.36" fill="#e8e8e8" font-weight="bold" stroke="#e8e8e8" stroke-width="0.44999999999999996" textLength="16.47" lengthAdjust="spacingAndGlyphs">Data</text>
<text x="170" y="461.2" font-size="8.76" fill="#e0e0e0" stroke="#e0e0e0" stroke-width="0.3" textLength="173.02" lengthAdjust="spacingAndGlyphs">Usuário <tspan fill="#62a6d6" stroke="#62a6d6" text-decoration="underline">andre</tspan> acessou a tabela #__update_sites</text>
<text x="440.5" y="461.2" font-size="8.91" fill="#e0e0e0" stroke="#e0e0e0" stroke-width="0.3" textLength="95.89" lengthAdjust="spacingAndGlyphs">Menos de um minuto atrás</text>
<text x="577.2" y="67.9" font-size="8.36" fill="#e8e8e8" font-weight="bold" stroke="#e8e8e8" stroke-width="0.44999999999999996" textLength="27.04" lengthAdjust="spacingAndGlyphs">System</text>
<text x="575.2" y="119.9" font-size="7.15" fill="#e8e8e8" font-weight="bold" stroke="#e8e8e8" stroke-width="0.44999999999999996" textLength="61.03" lengthAdjust="spacingAndGlyphs">Desbloqueio Global</text>
<text x="701.2" y="119.9" font-size="7.15" fill="#e8e8e8" font-weight="bold" stroke="#e8e8e8" stroke-width="0.44999999999999996" textLength="19.51" lengthAdjust="spacingAndGlyphs">Cache</text>
<text x="827.2" y="119.9" font-size="7.15" fill="#e8e8e8" font-weight="bold" stroke="#e8e8e8" stroke-width="0.44999999999999996" textLength="71.15" lengthAdjust="spacingAndGlyphs">Configurações Globais</text>
<text x="577.2" y="164.1" font-size="8.36" fill="#e8e8e8" font-weight="bold" stroke="#e8e8e8" stroke-width="0.44999999999999996" textLength="46.02" lengthAdjust="spacingAndGlyphs">Notifications</text>
<text x="576.8" y="217.8" font-size="7.43" fill="#f4f4f4" font-weight="bold" stroke="#f4f4f4" stroke-width="0.44999999999999996" textLength="75.77" lengthAdjust="spacingAndGlyphs">Joomla está atualizado.</text>
<text x="702.8" y="217.8" font-size="7.43" fill="#f4f4f4" font-weight="bold" stroke="#f4f4f4" stroke-width="0.44999999999999996" textLength="80.00" lengthAdjust="spacingAndGlyphs">Atualizações disponíveis:</text>
<text x="828.8" y="210.60000000000002" font-size="7.43" fill="#f4f4f4" font-weight="bold" stroke="#f4f4f4" stroke-width="0.44999999999999996" textLength="73.51" lengthAdjust="spacingAndGlyphs">As substituições estão</text>
<text x="828.8" y="217.8" font-size="7.43" fill="#f4f4f4" font-weight="bold" stroke="#f4f4f4" stroke-width="0.44999999999999996" textLength="38.26" lengthAdjust="spacingAndGlyphs">atualizadas.</text>
<text x="786.4" y="217.8" font-size="7.26" fill="#2c3440" font-weight="bold" stroke="#2c3440" stroke-width="0.44999999999999996" textLength="3.67" lengthAdjust="spacingAndGlyphs">2</text>
<text x="576.8" y="267.40000000000003" font-size="7.43" fill="#f4f4f4" font-weight="bold" stroke="#f4f4f4" stroke-width="0.44999999999999996" textLength="90.38" lengthAdjust="spacingAndGlyphs">Não há pedidos urgentes de</text>
<text x="576.8" y="274.6" font-size="7.43" fill="#f4f4f4" font-weight="bold" stroke="#f4f4f4" stroke-width="0.44999999999999996" textLength="39.39" lengthAdjust="spacingAndGlyphs">privacidade.</text>
<text x="567" y="318.2" font-size="8.36" fill="#e8e8e8" font-weight="bold" stroke="#e8e8e8" stroke-width="0.44999999999999996" textLength="59.96" lengthAdjust="spacingAndGlyphs">Logged-in Users</text>
<text x="567" y="345.5" font-size="8.36" fill="#e8e8e8" font-weight="bold" stroke="#e8e8e8" stroke-width="0.44999999999999996" textLength="21.11" lengthAdjust="spacingAndGlyphs">Nome</text>
<text x="759.7" y="345.5" font-size="8.36" fill="#e8e8e8" font-weight="bold" stroke="#e8e8e8" stroke-width="0.44999999999999996" textLength="19.85" lengthAdjust="spacingAndGlyphs">Local</text>
<text x="875.5" y="345.5" font-size="8.36" fill="#e8e8e8" font-weight="bold" stroke="#e8e8e8" stroke-width="0.44999999999999996" textLength="16.47" lengthAdjust="spacingAndGlyphs">Data</text>
<text x="567" y="370.7" font-size="8.80" fill="#62a6d6" stroke="#62a6d6" stroke-width="0.3" textLength="85.36" lengthAdjust="spacingAndGlyphs" text-decoration="underline">Carlos Andre G. Martins</text>
<text x="759.7" y="370.7" font-size="9.13" fill="#e0e0e0" stroke="#e0e0e0" stroke-width="0.3" textLength="52.59" lengthAdjust="spacingAndGlyphs">Administração</text>
<text x="875.5" y="370.7" font-size="8.80" fill="#e0e0e0" stroke="#e0e0e0" stroke-width="0.3" textLength="40.92" lengthAdjust="spacingAndGlyphs">27-09-2025</text>
<text x="875.5" y="382.7" font-size="8.80" fill="#e0e0e0" stroke="#e0e0e0" stroke-width="0.3" textLength="20.02" lengthAdjust="spacingAndGlyphs">16:38</text>
<text x="567" y="419.9" font-size="8.36" fill="#e8e8e8" font-weight="bold" stroke="#e8e8e8" stroke-width="0.44999999999999996" textLength="86.86" lengthAdjust="spacingAndGlyphs">Recently Added Articles</text>
<text x="699.5" y="440.6" font-size="8.06" fill="#8d9096" font-weight="bold" stroke="#8d9096" stroke-width="0.44999999999999996" textLength="114.00" lengthAdjust="spacingAndGlyphs">Nenhum artigo foi criado ainda.</text>
<text x="18.75" y="478.7" font-size="7.57" fill="#cfcfcf" stroke="#cfcfcf" stroke-width="0.3" textLength="18.74" lengthAdjust="spacingAndGlyphs">J! Info</text>
<text x="42.8" y="478.7" font-size="7.29" fill="#cfcfcf" stroke="#cfcfcf" stroke-width="0.3" textLength="24.69" lengthAdjust="spacingAndGlyphs">Request</text>
<text x="72.8" y="478.7" font-size="7.17" fill="#cfcfcf" stroke="#cfcfcf" stroke-width="0.3" textLength="23.19" lengthAdjust="spacingAndGlyphs">Session</text>
<text x="101.3" y="478.7" font-size="7.65" fill="#cfcfcf" stroke="#cfcfcf" stroke-width="0.3" textLength="19.70" lengthAdjust="spacingAndGlyphs">Profile</text>
<text x="125.7" y="478.7" font-size="7.63" fill="#cfcfcf" stroke="#cfcfcf" stroke-width="0.3" textLength="24.30" lengthAdjust="spacingAndGlyphs">Queries</text>
<text x="154.6" y="478.4" font-size="6.05" fill="#d0d0d0" stroke="#d0d0d0" stroke-width="0.3" textLength="6.12" lengthAdjust="spacingAndGlyphs">40</text>
<text x="866.7" y="478.7" font-size="6.71" fill="#cfcfcf" stroke="#cfcfcf" stroke-width="0.3" textLength="18.31" lengthAdjust="spacingAndGlyphs">212ms</text>
<text x="894" y="478.7" font-size="6.68" fill="#cfcfcf" stroke="#cfcfcf" stroke-width="0.3" textLength="24.29" lengthAdjust="spacingAndGlyphs">4.228MB</text>
</svg>
</body></html>
